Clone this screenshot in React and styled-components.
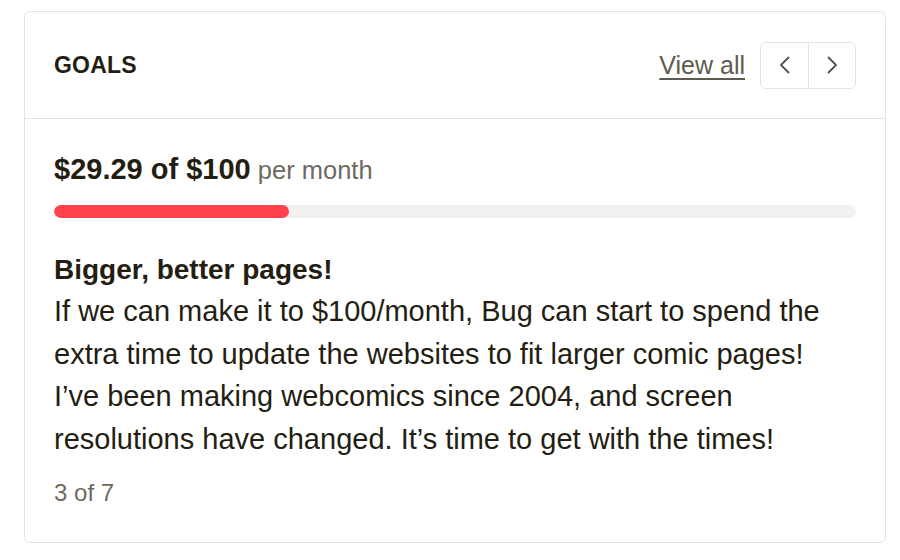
import React from "react";
import styled, { createGlobalStyle } from "styled-components";

const GlobalStyle = createGlobalStyle`
  body {
    margin: 0;
    background: #ffffff;
    font-family: "Liberation Sans", Arial, sans-serif;
    color: #241e12;
  }
`;

const goal = {
  raised: 29.29,
  target: 100,
  title: "Bigger, better pages!",
  lines: [
    "If we can make it to $100/month, Bug can start to spend the",
    "extra time to update the websites to fit larger comic pages!",
    "I\u2019ve been making webcomics since 2004, and screen",
    "resolutions have changed. It\u2019s time to get with the times!",
  ],
  index: 3,
  total: 7,
};

function App() {
  const pct = (goal.raised / goal.target) * 100;
  return (
    <>
      <GlobalStyle />
      <Page>
        <Card>
          <Header>
            <Heading>GOALS</Heading>
            <Actions>
              <ViewAll href="#">View all</ViewAll>
              <Pager>
                <PageButton aria-label="Previous">
                  <Chevron d="M13.5 2.5 L6 10 L13.5 17.5" />
                </PageButton>
                <PageButton aria-label="Next" divided>
                  <Chevron d="M6.5 2.5 L14 10 L6.5 17.5" />
                </PageButton>
              </Pager>
            </Actions>
          </Header>
          <Body>
            <Amount>
              ${goal.raised.toFixed(2)} of ${goal.target}
              <Per> per month</Per>
            </Amount>
            <Track>
              <Fill style={{ width: `${pct}%` }} />
            </Track>
            <GoalTitle>{goal.title}</GoalTitle>
            <Description>
              {goal.lines.map((l, i) => (
                <span key={i}>
                  {l}
                  <br />
                </span>
              ))}
            </Description>
            <Counter>
              {goal.index} of {goal.total}
            </Counter>
          </Body>
        </Card>
      </Page>
    </>
  );
}

function Chevron({ d }) {
  return (
    <svg width="20" height="20" viewBox="0 0 20 20" fill="none">
      <path d={d} stroke="#55524c" strokeWidth="1.8" strokeLinecap="round" strokeLinejoin="round" />
    </svg>
  );
}

const Page = styled.div`
  padding: 11px 14px 0 24px;
`;

const Card = styled.div`
  width: 862px;
  box-sizing: border-box;
  border: 1.5px solid #e5e3dd;
  border-radius: 6px;
  background: #fff;
`;

const Header = styled.div`
  display: flex;
  align-items: center;
  justify-content: space-between;
  height: 106px;
  padding: 0 29px 0 29px;
  border-bottom: 1.5px solid #e5e3dd;
`;

const Heading = styled.h2`
  margin: 0;
  font-size: 23px;
  font-weight: 700;
  letter-spacing: 0.2px;
  color: #241e12;
`;

const Actions = styled.div`
  display: flex;
  align-items: center;
  gap: 15px;
`;

const ViewAll = styled.a`
  font-size: 25px;
  color: #5e5a52;
  text-decoration: underline;
  text-underline-offset: 4px;
  text-decoration-thickness: 1.5px;
`;

const Pager = styled.div`
  display: flex;
  border: 1.5px solid #e5e3dd;
  border-radius: 6px;
  overflow: hidden;
`;

const PageButton = styled.button`
  display: flex;
  align-items: center;
  justify-content: center;
  width: 47px;
  height: 45px;
  padding: 0;
  border: none;
  border-left: ${({ divided }) => (divided ? "1.5px solid #e5e3dd" : "none")};
  background: #fff;
  cursor: pointer;
`;

const Body = styled.div`
  padding: 34px 29px 34px 29px;
`;

const Amount = styled.div`
  font-size: 29px;
  font-weight: 700;
  line-height: 32px;
  color: #241e12;
`;

const Per = styled.span`
  font-size: 25.5px;
  font-weight: 400;
  color: #6e6a62;
`;

const Track = styled.div`
  margin-top: 19px;
  height: 13px;
  border-radius: 7px;
  background: #f2f1ef;
  overflow: hidden;
`;

const Fill = styled.div`
  height: 100%;
  border-radius: 7px;
  background: #ff424d;
`;

const GoalTitle = styled.div`
  margin-top: 31px;
  font-size: 28px;
  font-weight: 700;
  line-height: 42px;
  color: #241e12;
`;

const Description = styled.p`
  margin: -1px 0 0 0;
  font-size: 29px;
  line-height: 42.5px;
  color: #241e12;
`;

const Counter = styled.div`
  margin-top: 18px;
  font-size: 24px;
  line-height: 30px;
  color: #6e6a62;
`;

export default App;
